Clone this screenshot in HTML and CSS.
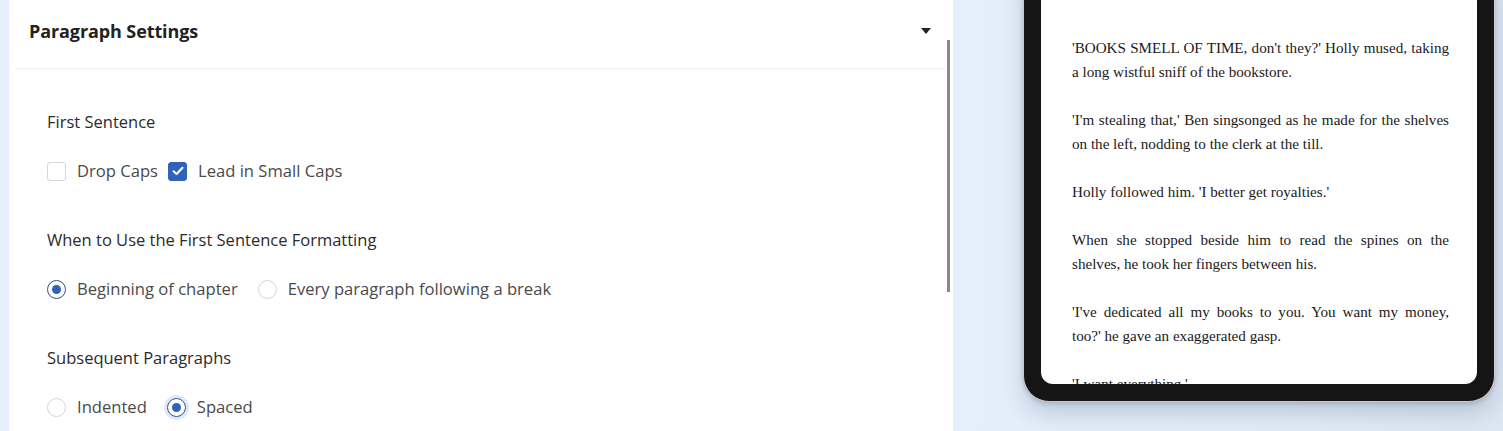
FILE: index.html
```html
<!DOCTYPE html>
<html>
<head>
<meta charset="utf-8">
<link rel="stylesheet" href="styles.css">
</head>
<body>
<div class="panel">
  <div class="header">
    <span class="title">Paragraph Settings</span>
    <svg class="caret" width="10" height="6" viewBox="0 0 10 6"><path d="M0 0H10L5 6Z" fill="#222"/></svg>
  </div>
  <div class="content">
    <div class="section">
      <div class="label">First Sentence</div>
      <div class="row">
        <span class="opt"><span class="box"></span><span>Drop Caps</span></span>
        <span class="opt"><span class="box checked"><svg width="12" height="10" viewBox="0 0 12 10"><path d="M1.5 5.2L4.6 8L10.5 1.8" fill="none" stroke="#fff" stroke-width="2" stroke-linecap="round" stroke-linejoin="round"/></svg></span><span>Lead in Small Caps</span></span>
      </div>
    </div>
    <div class="section">
      <div class="label">When to Use the First Sentence Formatting</div>
      <div class="row wide">
        <span class="opt"><span class="radio on"></span><span>Beginning of chapter</span></span>
        <span class="opt"><span class="radio"></span><span>Every paragraph following a break</span></span>
      </div>
    </div>
    <div class="section">
      <div class="label">Subsequent Paragraphs</div>
      <div class="row wide">
        <span class="opt"><span class="radio"></span><span>Indented</span></span>
        <span class="opt"><span class="radio on focus"></span><span>Spaced</span></span>
      </div>
    </div>
  </div>
  <div class="scroll-thumb"></div>
</div>
<div class="preview">
  <div class="device">
    <div class="screen">
      <p>'BOOKS SMELL OF TIME, don't they?' Holly mused, taking a long wistful sniff of the bookstore.</p>
      <p>'I'm stealing that,' Ben singsonged as he made for the shelves on the left, nodding to the clerk at the till.</p>
      <p>Holly followed him. 'I better get royalties.'</p>
      <p>When she stopped beside him to read the spines on the shelves, he took her fingers between his.</p>
      <p>'I've dedicated all my books to you. You want my money, too?' he gave an exaggerated gasp.</p>
      <p>'I want everything.'</p>
    </div>
  </div>
</div>
</body>
</html>
```
FILE: styles.css
```css
* { box-sizing: border-box; }
html, body { margin: 0; height: 431px; overflow: hidden; }
body {
  background: #e5eefb;
  display: flex;
  font-family: "Open Sans", "Noto Sans", sans-serif;
}
.panel {
  margin-left: 9px;
  width: 944px;
  height: 431px;
  background: #fff;
  position: relative;
  flex: none;
}
.header {
  height: 69px;
  display: flex;
  align-items: center;
  justify-content: space-between;
  padding: 0 14px 6px 14px;
  margin: 0 8px 0 6px;
  border-bottom: 1px solid #eeeeee;
}
.title {
  font-size: 18px;
  font-weight: 700;
  color: #222;
  letter-spacing: -0.1px;
}
.caret { display: block; }
.content {
  padding: 41px 0 0 38px;
}
.section + .section { margin-top: 45px; }
.label {
  font-size: 16.5px;
  line-height: 24px;
  color: #2b2b2b;
}
.row {
  margin-top: 25px;
  display: flex;
  gap: 10px;
  height: 24px;
  align-items: center;
}
.row.wide { gap: 20px; }
.opt {
  display: flex;
  align-items: center;
  gap: 11px;
  font-size: 16.6px;
  color: #4a4a4a;
  line-height: 24px;
}
.box {
  width: 19px;
  height: 19px;
  border: 1px solid #d6d6d6;
  border-radius: 3px;
  display: flex;
  align-items: center;
  justify-content: center;
}
.box.checked {
  background: #2e63b9;
  border-color: #2e63b9;
}
.radio {
  width: 19px;
  height: 19px;
  border: 1px solid #d6d6d6;
  border-radius: 50%;
  position: relative;
}
.radio.on {
  border: 1.5px solid #2e4f85;
}
.radio.on::after {
  content: "";
  position: absolute;
  left: 50%;
  top: 50%;
  width: 9px;
  height: 9px;
  margin: -4.5px 0 0 -4.5px;
  border-radius: 50%;
  background: #2e63b9;
}
.radio.focus {
  box-shadow: 0 0 0 3px #dfe9f8;
}
.scroll-thumb {
  position: absolute;
  right: 3px;
  top: 40px;
  width: 3px;
  height: 252px;
  background: #8a8a8a;
}
.preview {
  flex: 1;
  padding-left: 70px;
  background: linear-gradient(90deg, #e5eefb 0%, #e3ecf9 60%, #dde6f3 100%);
}
.device {
  width: 472px;
  height: 432px;
  margin-top: -30px;
  background: #151515;
  border: 1px solid #c9c9c9;
  border-top: none;
  border-radius: 0 0 26px 26px;
  padding: 0 17px 17px 17px;
  box-shadow: 0 12px 22px rgba(60, 80, 110, 0.22), 0 2px 4px rgba(0,0,0,0.15);
}
.screen {
  width: 100%;
  height: 100%;
  background: #fff;
  border-radius: 0 0 12px 12px;
  overflow: hidden;
  padding: 66px 28px 0 31px;
  font-family: "Liberation Serif", "Times New Roman", serif;
  font-size: 15.12px;
  line-height: 24px;
  color: #1a1a1a;
  text-align: justify;
}
.screen p { margin: 0 0 24px 0; }
```
